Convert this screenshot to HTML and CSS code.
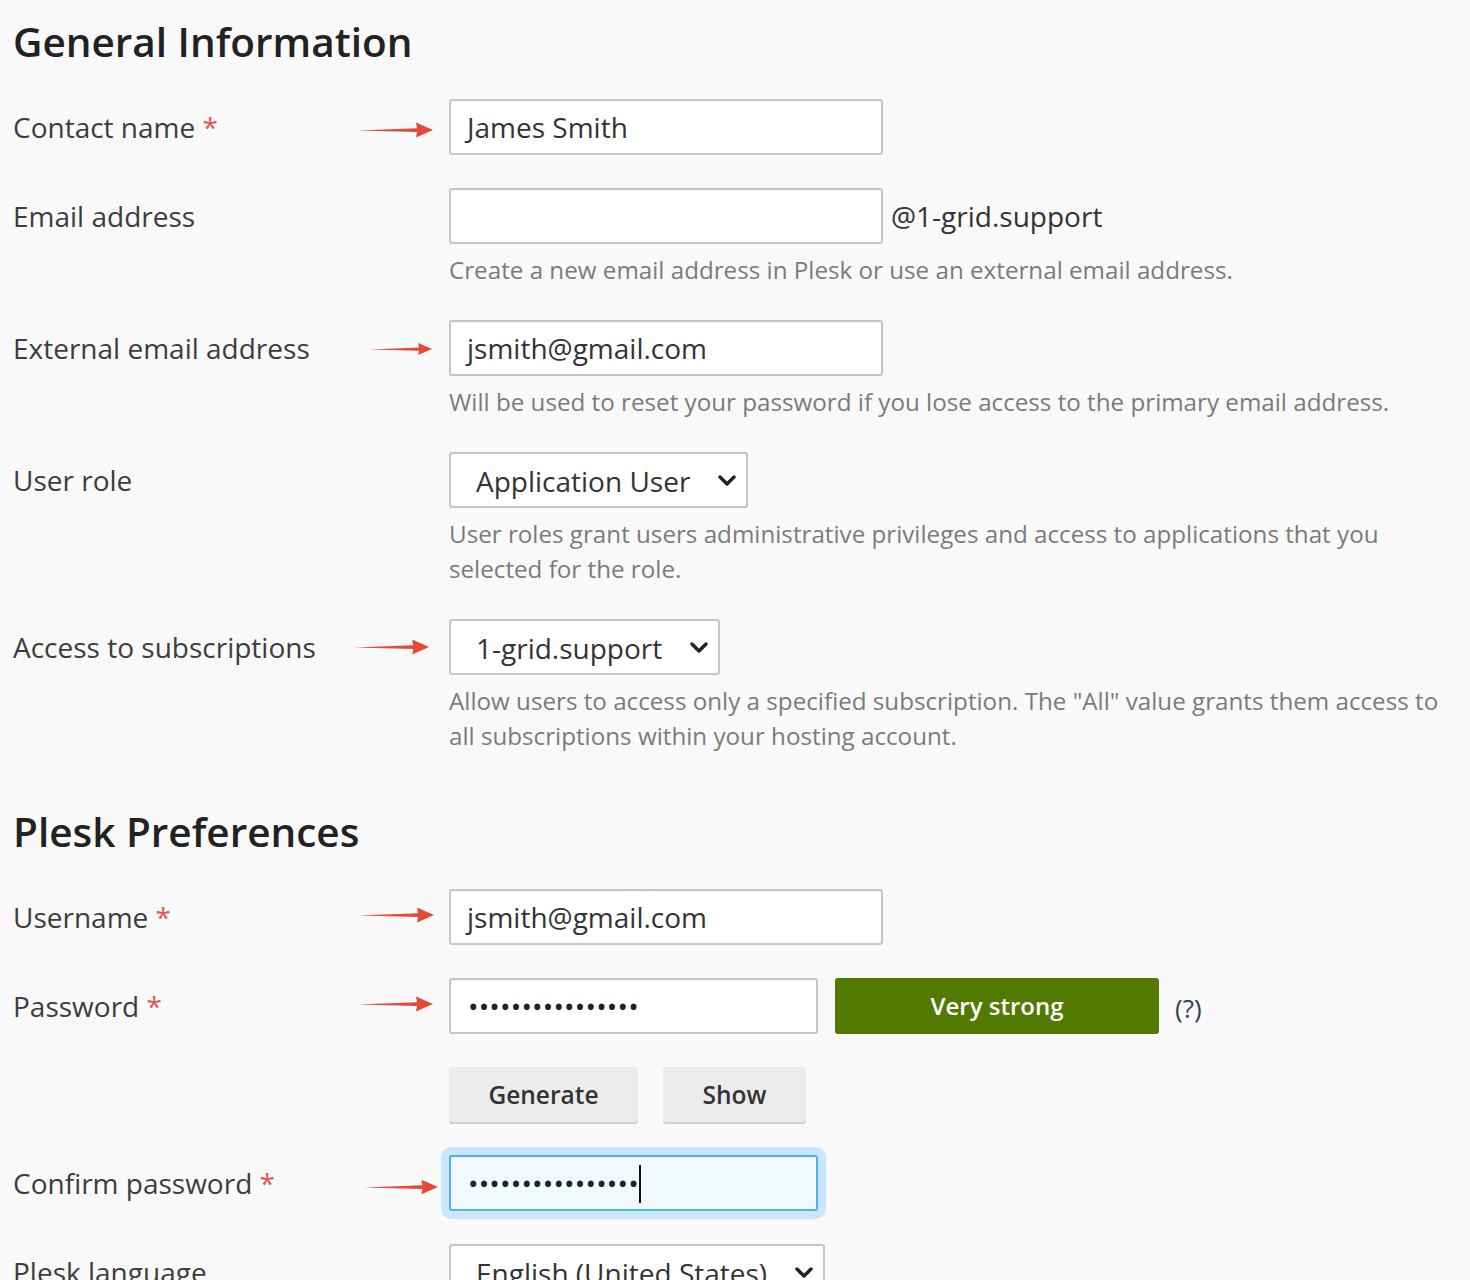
FILE: index.html
```html
<!DOCTYPE html>
<html lang="en">
<head>
<meta charset="utf-8">
<title>Add user</title>
<link rel="stylesheet" href="styles.css">
</head>
<body>
<div class="page">
  <h2 class="section-title">General Information</h2>

  <div class="row">
    <div class="label">Contact name <span class="req">*</span>
      <svg class="arrow a1" viewBox="0 0 76 18" width="76" height="18"><polygon points="0,9.5 60,7.2 59,1.5 76,9 59,16.5 60,11"/></svg>
    </div>
    <div class="field">
      <div class="input w-lg">James Smith</div>
    </div>
  </div>

  <div class="row">
    <div class="label">Email address</div>
    <div class="field">
      <div class="line">
        <div class="input w-lg"></div>
        <span class="suffix">@1-grid.support</span>
      </div>
      <div class="hint">Create a new email address in Plesk or use an external email address.</div>
    </div>
  </div>

  <div class="row">
    <div class="label">External email address
      <svg class="arrow a2" viewBox="0 0 76 18" width="62" height="18"><polygon points="0,9.5 60,7.2 59,1.5 76,9 59,16.5 60,11"/></svg>
    </div>
    <div class="field">
      <div class="input w-lg">jsmith@gmail.com</div>
      <div class="hint">Will be used to reset your password if you lose access to the primary email address.</div>
    </div>
  </div>

  <div class="row">
    <div class="label">User role</div>
    <div class="field">
      <div class="select">
        <span>Application User</span>
        <svg class="chev" viewBox="0 0 20 12" width="20" height="12"><polyline points="3,2 10,9 17,2"/></svg>
      </div>
      <div class="hint">User roles grant users administrative privileges and access to applications that you selected for the role.</div>
    </div>
  </div>

  <div class="row">
    <div class="label">Access to subscriptions
      <svg class="arrow a3" viewBox="0 0 76 18" width="75" height="18"><polygon points="0,9.5 60,7.2 59,1.5 76,9 59,16.5 60,11"/></svg>
    </div>
    <div class="field">
      <div class="select">
        <span>1-grid.support</span>
        <svg class="chev" viewBox="0 0 20 12" width="20" height="12"><polyline points="3,2 10,9 17,2"/></svg>
      </div>
      <div class="hint">Allow users to access only a specified subscription. The "All" value grants them access to all subscriptions within your hosting account.</div>
    </div>
  </div>

  <h2 class="section-title second">Plesk Preferences</h2>

  <div class="row">
    <div class="label">Username <span class="req">*</span>
      <svg class="arrow a4" viewBox="0 0 76 18" width="76" height="18"><polygon points="0,9.5 60,7.2 59,1.5 76,9 59,16.5 60,11"/></svg>
    </div>
    <div class="field">
      <div class="input w-lg">jsmith@gmail.com</div>
    </div>
  </div>

  <div class="row">
    <div class="label">Password <span class="req">*</span>
      <svg class="arrow a5" viewBox="0 0 76 18" width="84" height="18"><polygon points="0,9.5 60,7.2 59,1.5 76,9 59,16.5 60,11"/></svg>
    </div>
    <div class="field">
      <div class="line">
        <div class="input w-md dots">••••••••••••••••</div>
        <div class="strength">Very strong</div>
        <span class="help">(?)</span>
      </div>
    </div>
  </div>

  <div class="row">
    <div class="label"></div>
    <div class="field">
      <div class="buttons">
        <button class="btn btn-gen">Generate</button>
        <button class="btn btn-show">Show</button>
      </div>
    </div>
  </div>

  <div class="row">
    <div class="label">Confirm password <span class="req">*</span>
      <svg class="arrow a6" viewBox="0 0 76 18" width="74" height="18"><polygon points="0,9.5 60,7.2 59,1.5 76,9 59,16.5 60,11"/></svg>
    </div>
    <div class="field">
      <div class="focus-ring">
        <div class="input w-md dots focused">••••••••••••••••<span class="caret"></span></div>
      </div>
    </div>
  </div>

  <div class="row">
    <div class="label">Plesk language</div>
    <div class="field">
      <div class="select">
        <span>English (United States)</span>
        <svg class="chev" viewBox="0 0 20 12" width="20" height="12"><polyline points="3,2 10,9 17,2"/></svg>
      </div>
    </div>
  </div>
</div>
</body>
</html>
```

FILE: styles.css
```css
html, body {
  margin: 0;
  padding: 0;
  background: #f9f9f9;
}

body {
  font-family: "Open Sans", "Noto Sans", sans-serif;
  color: #333;
  height: 1280px;
  overflow: hidden;
}

.page {
  padding: 15px 10px 0 13px;
}

.section-title {
  margin: 0 0 30px 0;
  font-size: 40.5px;
  line-height: 54px;
  font-weight: 600;
  color: #222;
}

.section-title.second {
  margin-top: 52px;
}

.row {
  display: grid;
  grid-template-columns: 436px 1fr;
  margin-bottom: 33px;
}

.label {
  position: relative;
  font-size: 28px;
  line-height: 56px;
  color: #3d3d3d;
}

.req {
  color: #e0584f;
}

.arrow {
  position: absolute;
  top: 28px;
  fill: #e5493a;
}
.arrow.a1 { left: 344px; margin-top: -6px; }
.arrow.a2 { left: 357px; margin-top: -8px; }
.arrow.a3 { left: 341px; margin-top: -9px; }
.arrow.a4 { left: 345px; margin-top: -11px; }
.arrow.a5 { left: 340px; margin-top: -11px; }
.arrow.a6 { left: 351px; margin-top: -5px; }

.field {
  min-width: 0;
}

.line {
  display: flex;
  align-items: center;
}

.input {
  box-sizing: border-box;
  height: 56px;
  border: 2px solid #c6c6c6;
  border-radius: 3px;
  background: #fff;
  padding: 0 16px;
  font-size: 28px;
  line-height: 52px;
  color: #333;
  white-space: nowrap;
  box-shadow: inset 0 1px 1px rgba(0,0,0,0.04);
}

.w-lg { width: 434px; }
.w-md { width: 369px; }

.dots {
  font-size: 28px;
  padding-left: 17px;
  letter-spacing: 0.15px;
  color: #222;
}

.suffix {
  margin-left: 8px;
  font-size: 28px;
  line-height: 38px;
  color: #333;
}

.hint {
  margin-top: 8px;
  font-size: 24.2px;
  line-height: 35px;
  color: #7b7b7b;
}

.select {
  box-sizing: border-box;
  display: inline-flex;
  align-items: center;
  height: 56px;
  border: 2px solid #c6c6c6;
  border-radius: 3px;
  background: #fff;
  padding: 2px 9px 0 25px;
  font-size: 28px;
  color: #333;
  gap: 27px;
}

.chev {
  fill: none;
  stroke: #222;
  stroke-width: 3.4;
  stroke-linecap: round;
  stroke-linejoin: round;
}

.strength {
  box-sizing: border-box;
  width: 324px;
  height: 56px;
  margin-left: 17px;
  background: #527a00;
  border-radius: 3px;
  color: #fff;
  font-size: 24px;
  font-weight: 600;
  line-height: 56px;
  text-align: center;
}

.help {
  margin-left: 16px;
  font-size: 26px;
  color: #2f3f5c;
  padding-top: 4px;
}

.buttons {
  display: flex;
  gap: 25px;
}

.btn {
  height: 55px;
  border: 0;
  border-radius: 3px;
  background: #ececec;
  box-shadow: 0 2px 0 #cfcfcf;
  font-family: inherit;
  font-size: 24.5px;
  font-weight: 600;
  color: #333;
  padding: 0;
}
.btn-gen { width: 189px; }
.btn-show { width: 143px; }

.focus-ring {
  display: inline-block;
  margin: -8px 0 -8px -8px;
  padding: 8px;
  border-radius: 10px;
  background: #c9e6fa;
}

.input.focused {
  border-color: #55b0eb;
  background: #f1f8fe;
}

.caret {
  display: inline-block;
  width: 2px;
  height: 38px;
  background: #111;
  vertical-align: middle;
  margin-left: 0;
  margin-top: -6px;
}
```
